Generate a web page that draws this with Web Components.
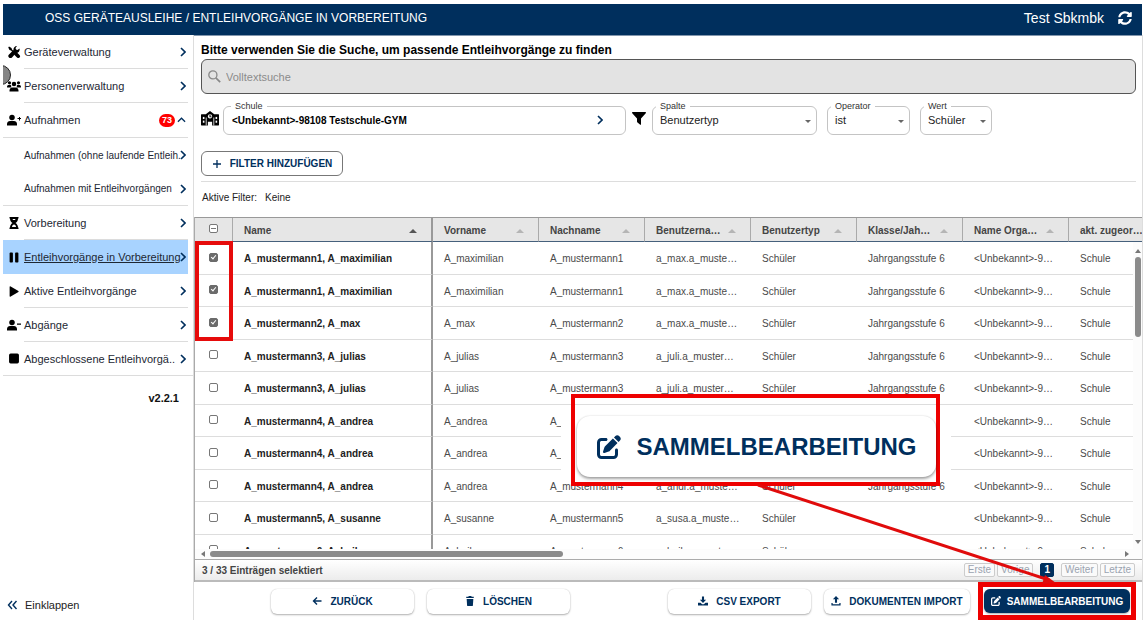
<!DOCTYPE html>
<html lang="de">
<head>
<meta charset="utf-8">
<meta name="viewport" content="width=device-width, initial-scale=1">
<title>OSS Geräteausleihe</title>
<style>
  html, body { margin: 0; height: 100%; }
  body {
    background: #fff;
    font-family: "Liberation Sans", Arial, sans-serif;
    font-size: 11px;
    color: #222;
    --navy: #002f5d;
    --red: #ee0000;
  }
</style>
</head>
<body>
<app-shell></app-shell>

<script>
const base = `*, *::before, *::after { box-sizing: border-box; }
  button, input, select, a { font: inherit; color: inherit; }`;

function define(name, html, setup) {
  const template = document.createElement('template');
  template.innerHTML = html;
  customElements.define(name, class extends HTMLElement {
    constructor() {
      super();
      this.attachShadow({ mode: 'open' }).appendChild(template.content.cloneNode(true));
    }
    connectedCallback() {
      if (setup && !this.ready) { this.ready = true; setup(this, this.shadowRoot); }
    }
  });
}

/* ---------- icons ---------- */
const icons = {
  sync: ['0 0 512 512', '<path d="M370.72 133.28C339.458 104.008 298.888 87.962 255.848 88c-77.458.068-144.328 53.178-162.791 126.85-1.344 5.363-6.122 9.15-11.651 9.15H24.103c-7.498 0-13.194-6.807-11.807-14.176C33.933 94.924 134.813 8 256 8c66.448 0 126.791 26.136 171.315 68.685L463.03 40.97C478.149 25.851 504 36.559 504 57.941V192c0 13.255-10.745 24-24 24H345.941c-21.382 0-32.09-25.851-16.971-40.971l41.75-41.749zM32 296h134.059c21.382 0 32.09 25.851 16.971 40.971l-41.75 41.75c31.262 29.273 71.835 45.319 114.876 45.28 77.418-.07 144.315-53.144 162.787-126.849 1.344-5.363 6.122-9.15 11.651-9.15h57.304c7.498 0 13.194 6.807 11.807 14.176C478.067 417.076 377.187 504 256 504c-66.448 0-126.791-26.136-171.315-68.685L48.97 471.03C33.851 486.149 8 475.441 8 454.059V320c0-13.255 10.745-24 24-24z"/>'],
  edit: ['0 0 512 512', '<path d="M471.6 21.7c-21.9-21.9-57.3-21.9-79.2 0L362.3 51.7l97.9 97.9 30.1-30.1c21.9-21.9 21.9-57.3 0-79.2L471.6 21.7zm-299.2 220c-6.1 6.1-10.8 13.6-13.5 21.9l-29.6 88.8c-2.9 8.6-.6 18.1 5.8 24.6s15.9 8.7 24.6 5.8l88.8-29.6c8.2-2.7 15.7-7.4 21.9-13.5L437.7 172.3 339.7 74.3 172.4 241.7zM96 64C43 64 0 107 0 160V416c0 53 43 96 96 96H352c53 0 96-43 96-96V320c0-17.7-14.3-32-32-32s-32 14.3-32 32v96c0 17.7-14.3 32-32 32H96c-17.7 0-32-14.3-32-32V160c0-17.7 14.3-32 32-32h96c17.7 0 32-14.3 32-32s-14.3-32-32-32H96z"/>'],
  tools: ['0 0 24 24', '<path d="M2 1 7 4 8 7 12.5 11.5 10.5 13.5 6 9 3 8 0.500 3z"/><path d="M14 13l3-1 6 6a3 3 0 0 1-5 5l-6-6z"/><path d="M23 5l-4 3-3-1-1-3 3-4a7 7 0 0 0-7 8L2 17a4 4 0 1 0 6 6l8-9a7 7 0 0 0 7-9z"/>'],
  users: ['0 0 28 22', '<circle cx="5" cy="4.500" r="3.200"/><circle cx="23" cy="4.500" r="3.200"/><circle cx="14" cy="7" r="4.500"/><path d="M0 13c0-3 2-4.500 5-4.500 2 0 3 .5 3.500 1.500-.5 2 0 3 .5 4H1.500Q0 14 0 13zM28 13c0-3-2-4.500-5-4.500-2 0-3 .5-3.500 1.500 .5 2 0 3-.5 4h7.500q1.500 0 1.500-1zM5 22v-2c0-4 3-6 6-6h6c3 0 6 2 6 6v2z"/>'],
  userplus: ['0 0 28 22', '<circle cx="10" cy="6" r="5.500"/><path d="M0 22v-3c0-4 3-6 6-6h8c3 0 6 2 6 6v3z"/><path d="M22 7h2V5h2v2h2v2h-2v3h-2V9h-3V7z"/>'],
  userminus: ['0 0 28 22', '<circle cx="10" cy="6" r="5.500"/><path d="M0 22v-3c0-4 3-6 6-6h8c3 0 6 2 6 6v3zM20 8h8v2.500h-8z"/>'],
  hourglass: ['0 0 20 24', '<path d="M1 0h18v3h-1c0 4-2 7-5 9 3 2 5 5 5 9h1v3H1v-3h1c0-4 2-7 5-9-3-2-5-5-5-9H1z"/><path fill="#fff" d="M7 4h6l-1 2H8zM6 20c0-3 2-5 4-5s4 2 4 5z"/>'],
  pause: ['0 0 20 20', '<rect x="2" y="1" width="6" height="18" rx="1.500"/><rect x="12" y="1" width="6" height="18" rx="1.500"/>'],
  play: ['0 0 20 20', '<path d="M2 2q0-2 2-1l14 8q1 1 0 2L4 19q-2 1-2-1z"/>'],
  stop: ['0 0 20 20', '<rect x="1" y="1" width="18" height="18" rx="3"/>'],
  school: ['0 0 34 28', '<path d="M1 6h8l8-6 8 6h8q1 0 1 1v19q0 1-1 1H21v-7h-8v7H1q-1 0-1-1V7q0-1 1-1z"/><g fill="#fff"><rect x="3.500" y="11" width="3" height="4"/><rect x="3.500" y="18" width="3" height="4"/><rect x="27.500" y="11" width="3" height="4"/><rect x="27.500" y="18" width="3" height="4"/><circle cx="17" cy="10" r="4"/><path d="M9 12h1.500v15H9zM23.500 12H25v15h-1.500z"/></g><path d="M16 7h2v3h2v1.500h-4z"/>'],
  filter: ['0 0 28 26', '<path d="M1 0h26q1.500 1 .5 2.500L18 13v12q-.5 1-1.500.5L11 21q-1-1-1-2v-6L.5 2.500Q-.5 1 1 0z"/>'],
  search: ['0 0 24 24', '<circle cx="9" cy="9" r="7.500" fill="none" stroke="currentColor" stroke-width="2.400"/><path d="M14.500 14.500l8 8" stroke="currentColor" stroke-width="3"/>'],
  right: ['0 0 12 20', '<path d="M2 2l8 8-8 8" fill="none" stroke="currentColor" stroke-width="3.200"/>'],
  up: ['0 0 20 12', '<path d="M2 10l8-8 8 8" fill="none" stroke="currentColor" stroke-width="2.800"/>'],
  dleft: ['0 0 20 20', '<path d="M9 2l-7 8 7 8M18 2l-7 8 7 8" fill="none" stroke="currentColor" stroke-width="2.800"/>'],
  plus: ['0 0 20 20', '<path d="M10 2v16M2 10h16" stroke="currentColor" stroke-width="2.600"/>'],
  back: ['0 0 20 20', '<path d="M19 10H3M10 3l-7 7 7 7" fill="none" stroke="currentColor" stroke-width="2.800"/>'],
  trash: ['0 0 20 24', '<path d="M1 2h5l1-2h6l1 2h5v3H1zM2 7h16l-1 15q0 2-2 2H5q-2 0-2-2z"/>'],
  download: ['0 0 24 24', '<path d="M9.500 1h5v8h5L12 17 4.500 9h5zM0 16h6l4 4h4l4-4h6v7H0z"/>'],
  upload: ['0 0 24 24', '<path d="M9.500 16h5V8h5L12 0 4.500 8h5zM1 17h3v3h16v-3h3v6H1z"/>'],
};
define('ui-icon', `<style>:host{display:inline-flex;flex:none;width:12px;height:12px}svg{width:100%;height:100%;fill:currentColor;display:block}</style><svg aria-hidden="true"></svg>`,
  (el, root) => {
    const [box, body] = icons[el.getAttribute('name')];
    const svg = root.querySelector('svg');
    svg.setAttribute('viewBox', box);
    svg.innerHTML = body;
  });

/* ---------- header ---------- */
define('app-header', `<style>${base}
  :host { display: flex; align-items: center; justify-content: space-between; height: 31px; flex: none;
    padding: 0 10px 3px 42px; background: var(--navy); color: #fff; }
  h1 { margin: 0; font-size: 12px; font-weight: 400; }
  .user { display: flex; align-items: center; gap: 14px; font-size: 14px; }
  button { display: flex; border: 0; padding: 0; background: none; }
  ui-icon { width: 14px; height: 14px; }
</style>
<h1>OSS GERÄTEAUSLEIHE / ENTLEIHVORGÄNGE IN VORBEREITUNG</h1>
<div class="user"><span>Test Sbkmbk</span><button aria-label="Aktualisieren"><ui-icon name="sync"></ui-icon></button></div>`);

/* ---------- navigation ---------- */
define('nav-item', `<style>${base}
  :host { display: block; height: 34px; margin-right: 5px; }
  a { display: flex; height: 100%; color: #1d2733; text-decoration: none; position: relative; }
  .lead { width: 21px; flex: none; display: flex; align-items: center; justify-content: center; color: #000; }
  .lead ui-icon { width: 14px; height: 12px; }
  .lead ui-icon.small { height: 11px; }
  .body { flex: 1; min-width: 0; display: flex; align-items: center; gap: 2px; border-bottom: 1px solid #dcdcdc; padding-right: 2px; }
  .label { flex: 1; min-width: 0; white-space: nowrap; font-size: 11px; }
  .chev { width: 6px; height: 10px; color: var(--navy); }
  .up { width: 9px; height: 6px; color: var(--navy); }
  b { background: #f00; color: #fff; font-size: 9px; line-height: 13px; padding: 0 3px; border-radius: 7px; }
  :host([wide]) { height: 35px; }
  :host([wide]) a, :host([last]) a { border-bottom: 1px solid #dcdcdc; }
  :host([wide]) .body, :host([last]) .body, :host([sub]) .body { border-bottom: 0; }
  :host([last]) { margin-right: 0; }
  :host([last]) .body { padding-right: 7px; }
  :host([sub]) .label { font-size: 10px; }
  :host([end]) a { border-bottom: 1px solid #dcdcdc; }
  :host([selected]) a { background: #a8d3ff; }
  :host([selected]) .label { text-decoration: underline; }
  :host([selected]) .body { border-bottom-color: #a8d3ff; }
</style>
<a href="#"><span class="lead"></span><span class="body"><span class="label"><slot></slot></span></span></a>`,
  (el, root) => {
    const icon = el.getAttribute('icon'), badge = el.getAttribute('badge');
    if (icon) root.querySelector('.lead').innerHTML =
      `<ui-icon name="${icon}" class="${/pause|play|stop/.test(icon) ? 'small' : ''}"></ui-icon>`;
    root.querySelector('.body').insertAdjacentHTML('beforeend',
      badge ? `<b>${badge}</b><ui-icon class="up" name="up"></ui-icon>` : `<ui-icon class="chev" name="right"></ui-icon>`);
  });

define('side-nav', `<style>${base}
  :host { display: flex; flex-direction: column; width: 191px; flex: none; border-right: 1px solid #ddd; position: relative; overflow: hidden; }
  .knob { position: absolute; left: -12px; top: 30px; width: 20px; height: 20px; border-radius: 50%; background: #858585; border: 1px solid #222; }
  nav { position: relative; }
  .version { margin: 16px 14px 0 0; text-align: right; font-size: 11px; font-weight: 700; color: #111; }
  button { display: flex; align-items: center; gap: 7px; margin: auto 0 9px 0; padding: 0 0 0 4px; border: 0; background: none; font-size: 11px; color: #222; }
  button ui-icon { width: 11px; height: 10px; color: var(--navy); }
</style>
<div class="knob"></div>
<nav>
  <nav-item icon="tools">Geräteverwaltung</nav-item>
  <nav-item icon="users">Personenverwaltung</nav-item>
  <nav-item icon="userplus" badge="73" wide>Aufnahmen</nav-item>
  <nav-item sub>Aufnahmen (ohne laufende Entleih.</nav-item>
  <nav-item sub end>Aufnahmen mit Entleihvorgängen</nav-item>
  <nav-item icon="hourglass">Vorbereitung</nav-item>
  <nav-item icon="pause" selected>Entleihvorgänge in Vorbereitung</nav-item>
  <nav-item icon="play">Aktive Entleihvorgänge</nav-item>
  <nav-item icon="userminus">Abgänge</nav-item>
  <nav-item icon="stop" last>Abgeschlossene Entleihvorgä..</nav-item>
</nav>
<div class="version">v2.2.1</div>
<button><ui-icon name="dleft"></ui-icon>Einklappen</button>`);

/* ---------- form fields ---------- */
const fieldCss = `${base}
  :host { display: block; min-width: 0; }
  fieldset { margin: 0; padding: 0; border: 1px solid #c4c4c4; border-radius: 6px; height: 34px; min-width: 0; }
  legend { margin-left: 7px; padding: 0 4px; font-size: 9px; line-height: 10px; height: 10px; color: #333; }
  select, button { width: 100%; height: 18px; border: 0; background: none; outline: 0; display: block; }`;
define('select-field', `<style>${fieldCss}
  legend { margin-left: 3px; }
  select { appearance: none; padding: 0 16px 0 7px; font-size: 11px; color: #222; }
  .wrap { position: relative; }
  .wrap::after { content: ""; position: absolute; right: 5px; top: 9px; border: 3px solid transparent; border-top-color: #666; border-bottom: 0; pointer-events: none; }
</style>
<fieldset><legend><label for="s"></label></legend><div class="wrap"><select id="s"></select></div></fieldset>`,
  (el, root) => {
    root.querySelector('label').textContent = el.getAttribute('label');
    root.querySelector('select').add(new Option(el.getAttribute('value')));
  });
define('picker-field', `<style>${fieldCss}
  button { display: flex; align-items: center; justify-content: space-between; padding: 0 22px 0 8px; font-size: 10px; font-weight: 700; color: #000; }
  ui-icon { width: 6px; height: 10px; color: var(--navy); }
</style>
<fieldset><legend></legend><button><slot></slot><ui-icon name="right"></ui-icon></button></fieldset>`,
  (el, root) => { root.querySelector('legend').textContent = el.getAttribute('label'); });

define('action-button', `<style>${base}
  :host { display: block; flex: none; }
  button { display: flex; align-items: center; justify-content: center; gap: 8px; width: 100%; height: 25px; padding: 0 8px;
    border: 0; border-radius: 6px; background: #fff; color: var(--navy); font-size: 10px; font-weight: 700; white-space: nowrap;
    box-shadow: 0 1px 2px rgba(0,0,0,.3), 0 0 1px rgba(0,0,0,.2); }
  .icon { display: flex; }
  ui-icon { width: 10px; height: 10px; }
  :host([primary]) button { background: var(--navy); color: #fff; height: 24px; gap: 6px; }
  :host([outlined]) button { border: 1px solid #777; box-shadow: none; }
  :host([large]) button { height: 61px; border-radius: 13px; font-size: 24px; gap: 16px; box-shadow: 0 2px 3px rgba(0,0,0,.35), 0 0 2px rgba(0,0,0,.15); }
  :host([large]) ui-icon { width: 24px; height: 24px; }
</style>
<button><span class="icon"></span><slot></slot></button>`,
  (el, root) => { root.querySelector('.icon').innerHTML = `<ui-icon name="${el.getAttribute('icon')}"></ui-icon>`; });

/* ---------- search and filters ---------- */
define('filter-panel', `<style>${base}
  :host { display: block; flex: none; padding: 8px 6px 0 7px; }
  .title { display: block; font-size: 12px; line-height: 12px; font-weight: 700; color: #000; margin-bottom: 3px; }
  .search { display: flex; align-items: center; gap: 5px; height: 35px; padding: 0 6px; background: #e3e3e3; border: 1px solid #555; border-radius: 6px; color: #888; }
  .search ui-icon { width: 13px; height: 13px; }
  input { flex: 1; border: 0; outline: 0; padding: 0; background: none; font-size: 11px; }
  input::placeholder { color: #8b8b8b; opacity: 1; }
  .filters { display: flex; align-items: center; margin-top: 7px; }
  .filters > ui-icon { color: #000; }
  .school { width: 18px; height: 15px; margin-right: 4px; }
  .funnel { width: 14px; height: 13px; margin: 0 6px; }
  picker-field { flex: 0 1 403px; }
  .c1 { flex: 0 1 165px; margin-right: 10px; } .c2 { flex: 0 1 83px; margin-right: 10px; } .c3 { flex: 0 1 72px; }
  action-button { width: 142px; margin: 16px 0 5px; }
  .active { display: flex; gap: 8px; border-top: 1px solid #ddd; padding: 10px 1px 0; font-size: 10px; line-height: 12px; height: 36px; color: #222; }
</style>
<label class="title" for="q">Bitte verwenden Sie die Suche, um passende Entleihvorgänge zu finden</label>
<div class="search"><ui-icon name="search"></ui-icon><input id="q" type="text" placeholder="Volltextsuche"></div>
<div class="filters">
  <ui-icon class="school" name="school"></ui-icon>
  <picker-field label="Schule">&lt;Unbekannt&gt;-98108 Testschule-GYM</picker-field>
  <ui-icon class="funnel" name="filter"></ui-icon>
  <select-field class="c1" label="Spalte" value="Benutzertyp"></select-field>
  <select-field class="c2" label="Operator" value="ist"></select-field>
  <select-field class="c3" label="Wert" value="Schüler"></select-field>
</div>
<action-button outlined icon="plus">FILTER HINZUFÜGEN</action-button>
<div class="active"><span>Aktive Filter:</span><span>Keine</span></div>`);

/* ---------- table ---------- */
const columns = ['Vorname', 'Nachname', 'Benutzerna…', 'Benutzertyp', 'Klasse/Jah…', 'Name Orga…', 'akt. zugeor…'];
const S = 'Schüler', J = 'Jahrgangsstufe 6';
const people = [
  ['A_mustermann1', 'A_maximilian', 'A_mustermann1', 'a_max.a_muste…', S, J],
  ['A_mustermann1', 'A_maximilian', 'A_mustermann1', 'a_max.a_muste…', S, J],
  ['A_mustermann2', 'A_max', 'A_mustermann2', 'a_max.a_muste…', S, J],
  ['A_mustermann3', 'A_julias', 'A_mustermann3', 'a_juli.a_muster…', S, J],
  ['A_mustermann3', 'A_julias', 'A_mustermann3', 'a_juli.a_muster…', S, J],
  ['A_mustermann4', 'A_andrea', 'A_', '', '', ''],
  ['A_mustermann4', 'A_andrea', 'A_', '', '', ''],
  ['A_mustermann4', 'A_andrea', 'A_mustermann4', 'a_andr.a_muste…', S, J],
  ['A_mustermann5', 'A_susanne', 'A_mustermann5', 'a_susa.a_muste…', S, ''],
  ['A_mustermann6', 'A_heike', 'A_mustermann6', 'a_heik.a_muste…', S, ''],
];
define('data-grid', `<style>${base}
  :host { display: flex; flex-direction: column; flex: 1; min-height: 0; border-left: 1px solid #aaa; position: relative; }
  .view { flex: 1; min-height: 0; overflow: hidden; border-top: 1px solid #999; background: linear-gradient(#e6e6e6 24px, #fff 24px); }
  table { table-layout: fixed; border-collapse: separate; border-spacing: 0; width: 980px; font-size: 10px; color: #4a4a4a; }
  th, td { padding: 2px 0 0 11px; text-align: left; white-space: nowrap; overflow: hidden; line-height: 12px; }
  th { height: 24px; background: #e6e6e6; border-right: 1px solid #aaa; border-bottom: 1px solid #46607c; color: #444; }
  th .cap { display: flex; align-items: center; justify-content: space-between; padding-right: 14px; }
  th .cap::after { content: ""; border: 4px solid transparent; border-bottom: 4px solid #b5b5b5; border-top: 0; }
  th.sorted .cap::after { border-bottom-color: #555; }
  td { height: 32px; border-bottom: 1px solid #ddd; }
  tr:nth-child(odd) td { height: 33px; }
  th.pick, td.pick { text-align: center; padding: 0 1px 0 0; }
  td.name { font-weight: 700; color: #222; }
  .name { border-right: 2px solid #999; }
  input { appearance: none; display: block; width: 9px; height: 9px; margin: 0 auto 2px; border: 1px solid #777; border-radius: 2px; background: #fff; position: relative; }
  input:checked { background: #6b6b6b; border-color: #6b6b6b; }
  input:checked::after { content: ""; position: absolute; left: 2px; top: 0; width: 3px; height: 5px; border: solid #fff; border-width: 0 1px 1px 0; transform: rotate(40deg); }
  input:indeterminate { background: linear-gradient(#777, #777) center / 5px 1px no-repeat #fff; }
  .bar-x { display: flex; align-items: center; height: 10px; flex: none; padding: 0 13px 0 6px; background: #fcfcfc; gap: 5px; }
  .bar-x i { width: 38%; height: 6px; border-radius: 3px; background: #8b8b8b; margin-right: auto; }
  .bar-y { position: absolute; right: 0; top: 25px; bottom: 33px; width: 9px; display: flex; flex-direction: column; align-items: center; gap: 4px; padding: 7px 0 5px; background: #fcfcfc; }
  .bar-y i { width: 6px; height: 80px; border-radius: 3px; background: #8b8b8b; margin-bottom: auto; }
  .a { border: 3px solid transparent; flex: none; }
  .u { border-bottom: 4px solid #777; border-top: 0; } .d { border-top: 4px solid #777; border-bottom: 0; }
  .l { border-right: 4px solid #777; border-left: 0; } .r { border-left: 4px solid #777; border-right: 0; }
  footer { display: flex; align-items: center; gap: 2px; height: 23px; flex: none; padding: 0 7px; border-top: 1px solid #aaa; border-bottom: 2px solid #bbb;
    background: linear-gradient(#fff, #ececec); font-size: 10px; }
  footer b { margin-right: auto; color: #444; }
  footer button { height: 14px; padding: 0 3px; border: 1px solid #ccc; border-radius: 2px; background: #fafafa; color: #9aa3b0; line-height: 12px; }
  footer button.on { background: var(--navy); border-color: var(--navy); color: #fff; margin: 0 5px; font-weight: 700; }
  .mark { position: absolute; left: 0; top: 24px; width: 38px; height: 100px; border: 4px solid #e60b0b; pointer-events: none; }
</style>
<div class="view"><table>
  <colgroup><col style="width:38px"><col style="width:200px"><col span="7" style="width:106px"></colgroup>
  <thead><tr><th class="pick"><input type="checkbox" aria-label="Alle auswählen"></th>
  <th class="name sorted"><div class="cap">Name</div></th></tr></thead><tbody></tbody></table></div>
<div class="bar-y"><span class="a u"></span><i></i><span class="a d"></span></div>
<div class="bar-x"><span class="a l"></span><i></i><span class="a r"></span></div>
<footer><b>3 / 33 Einträgen selektiert</b>
  <button>Erste</button><button>Vorige</button><button class="on">1</button><button>Weiter</button><button>Letzte</button></footer>
<div class="mark"></div>`,
  (el, root) => {
    root.querySelector('thead input').indeterminate = true;
    root.querySelector('thead tr').insertAdjacentHTML('beforeend', columns.map(c => `<th><div class="cap">${c}</div></th>`).join(''));
    root.querySelector('tbody').innerHTML = people.map(([family, first, ...rest], i) => `<tr>
      <td class="pick"><input type="checkbox" aria-label="Zeile ${i + 1}" ${i < 3 ? 'checked' : ''}></td>
      <td class="name">${family}, ${first}</td><td>${first}</td>${rest.map(t => `<td>${t}</td>`).join('')}
      <td>&lt;Unbekannt&gt;-9…</td><td>Schule</td></tr>`).join('');
  });

/* ---------- bottom actions ---------- */
define('action-bar', `<style>${base}
  :host { display: flex; align-items: center; height: 38px; flex: none; padding: 0 6px 0 77px; gap: 13px; }
  action-button { width: 143px; }
  .gap { flex: 1; }
  .wide { width: 146px; }
  .frame { border: 5px solid var(--red); height: 38px; padding: 2px 1px; margin-left: -5px; }
</style>
<action-button icon="back">ZURÜCK</action-button>
<action-button icon="trash">LÖSCHEN</action-button>
<span class="gap"></span>
<action-button icon="download">CSV EXPORT</action-button>
<action-button class="wide" icon="upload">DOKUMENTEN IMPORT</action-button>
<div class="frame"><action-button class="wide" primary icon="edit">SAMMELBEARBEITUNG</action-button></div>`);

/* ---------- enlarged button with its pointer ---------- */
define('zoom-callout', `<style>${base}
  .patch { position: absolute; right: 194px; bottom: 142px; width: 390px; height: 76px; background: #fff; }
  .box { position: absolute; right: 205px; bottom: 138px; width: 369px; height: 92px; border: 4px solid var(--red); padding: 18px 0 0 2px; }
  action-button { width: 359px; }
  svg { position: absolute; right: 85px; bottom: 40px; width: 310px; height: 104px; pointer-events: none; }
</style>
<div class="patch"></div>
<div class="box"><action-button large icon="edit">SAMMELBEARBEITUNG</action-button></div>
<svg viewBox="0 0 310 104" aria-hidden="true"><path d="M8 5L299 100" stroke="#e00b0b" stroke-width="3"/><path d="M306 103l-11-8 -3 9z" fill="#e00b0b"/></svg>`);

define('app-shell', `<style>${base}
  :host { box-sizing: border-box; display: flex; flex-direction: column; height: 100vh; padding: 4px 3px; position: relative; overflow: hidden; }
  .page { display: flex; flex: 1; min-height: 0; box-shadow: 1px 0 #ddd; }
  main { display: flex; flex-direction: column; flex: 1; min-width: 0; border-top: 1px solid #8296ad; }
</style>
<app-header></app-header>
<div class="page"><side-nav></side-nav>
  <main><filter-panel></filter-panel><data-grid></data-grid><action-bar></action-bar></main></div>
<zoom-callout></zoom-callout>`);
</script>
</body>
</html>
